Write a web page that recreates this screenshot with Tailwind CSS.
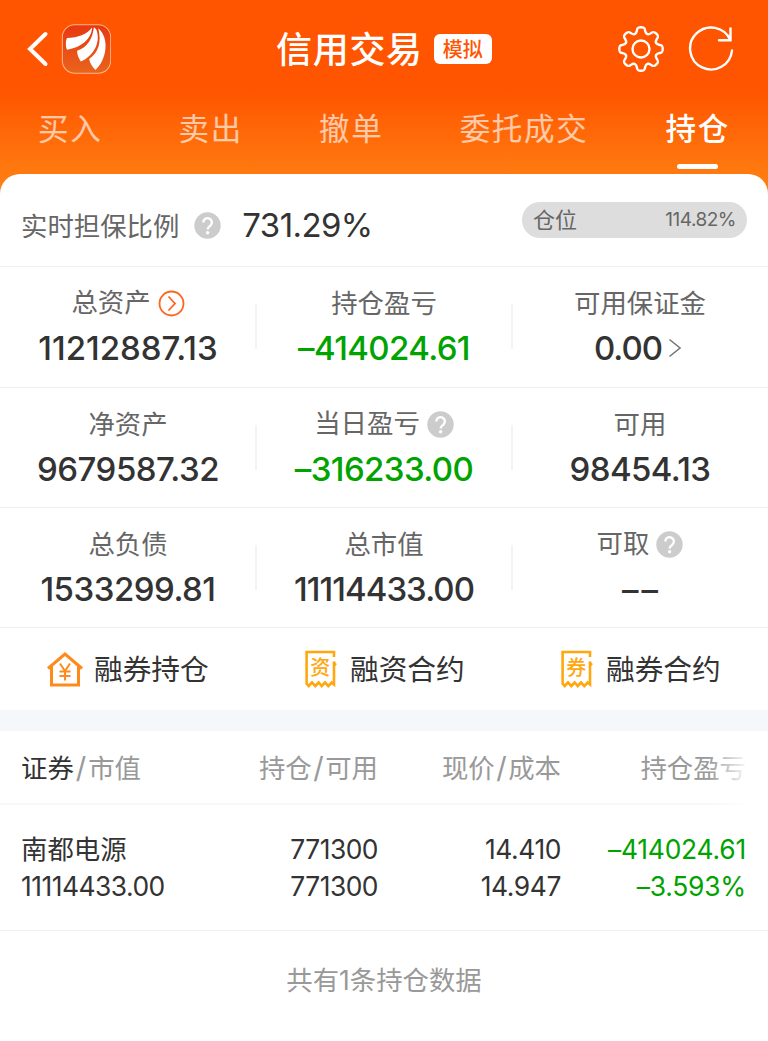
<!DOCTYPE html>
<html lang="zh-CN">
    <head>
        <meta charset="UTF-8" />
        <meta name="viewport" content="width=device-width, initial-scale=1.0" />
        <title>信用交易</title>
        <script src="https://cdn.jsdelivr.net/npm/@tailwindcss/browser@4"></script>
        <style>
            body {
                font-family: Inter, "Noto Sans CJK SC", sans-serif;
            }
        </style>
    </head>
    <body class="bg-white text-[#333] h-[1041px] overflow-hidden">
        <!-- 顶部 -->
        <header class="h-[194px] bg-linear-to-b from-[#ff5500] from-48% to-[#ff8214] to-100% text-white">
            <div class="h-[98px] flex items-center relative">
                <svg class="ml-[26px] w-[24px] h-[40px]" viewBox="0 0 24 40" fill="none" stroke="#fff" stroke-width="4" stroke-linecap="round" stroke-linejoin="miter">
                    <path d="M19.500 5 4 20l15.500 15" />
                </svg>
                <svg class="ml-[11px] w-[50px] h-[50px]" viewBox="-1 -1 149 149">
                    <defs>
                        <linearGradient id="logo" x1="0" y1="0" x2="0" y2="1">
                            <stop offset="0" stop-color="#e8380f" />
                            <stop offset="1" stop-color="#e9641c" />
                        </linearGradient>
                    </defs>
                    <rect x="3" y="1.500" width="144" height="144" rx="37" fill="url(#logo)" stroke="#ffb68f" stroke-width="3" />
                    <g fill="#fff">
                        <path d="M91 10C77 30 50 39 17 41c-5 8-4 26 0 35C60 68 88 46 92 11z" />
                        <path d="M97 9C93 44 77 70 47 79c0 12 5 23 11 32C93 95 115 60 107 24c-1-7-5-12-10-15z" />
                        <path d="M110 12c10 40 2 72-27 91 2 13 10 24 19 33C135 106 145 42 110 12z" />
                    </g>
                </svg>
                <div class="absolute left-[276px] flex items-center">
                    <h1 class="pt-[2px] text-[36px] leading-[48px] font-medium tracking-[0.7px]">信用交易</h1>
                    <span class="ml-[11px] w-[58px] h-[30px] rounded-[6px] bg-white text-[#ff5500] text-[20px] leading-[32px] font-medium text-center">模拟</span>
                </div>
                <svg class="ml-auto w-[48px] h-[48px]" viewBox="-24 -24 48 48" fill="none" stroke="#fff" stroke-width="2.400" stroke-linecap="round">
                    <defs>
                        <path id="tooth" d="M-6.200-15C-4.400-15.750-4.400-17-4-19-3.600-21.400-2.600-21.700 0-21.700S3.600-21.400 4-19C4.400-17 4.400-15.750 6.200-15" />
                    </defs>
                    <use href="#tooth" />
                    <use href="#tooth" transform="rotate(45)" />
                    <use href="#tooth" transform="rotate(90)" />
                    <use href="#tooth" transform="rotate(135)" />
                    <use href="#tooth" transform="rotate(180)" />
                    <use href="#tooth" transform="rotate(225)" />
                    <use href="#tooth" transform="rotate(270)" />
                    <use href="#tooth" transform="rotate(315)" />
                    <circle r="8.500" />
                </svg>
                <svg class="ml-[21.500px] mr-[33.500px] w-[48px] h-[48px]" viewBox="0 0 48 48" fill="none" stroke="#fff" stroke-width="2.400" stroke-linecap="round">
                    <path d="M45 25.500A21 21 0 1 1 43.300 15M43.500 3.500V15.300H32" />
                </svg>
            </div>
            <nav class="h-[76px] px-[38px] flex justify-between text-[30.500px] leading-[61px] tracking-[1.700px] text-white/65">
                <a class="-mr-[2px]">买入</a>
                <a class="ml-[15px]">卖出</a>
                <a class="ml-[13px]">撤单</a>
                <a class="ml-[13px]">委托成交</a>
                <a class="ml-[14px] text-white font-medium relative">持仓
                    <i class="absolute left-[11px] top-[66px] w-[41px] h-[5px] rounded-full bg-white"></i>
                </a>
            </nav>
        </header>

        <main class="-mt-[20px] relative bg-white rounded-t-[20px]">
            <!-- 担保比例 -->
            <div class="h-[93px] border-b border-[#efefef] flex items-center pl-[21px] pr-[21px]">
                <span class="text-[26.400px] text-[#666] pt-[14px]">实时担保比例</span>
                <svg class="ml-[15px] mt-[10px] w-[27px] h-[27px]" viewBox="0 0 27 27">
                    <circle cx="13.500" cy="13.500" r="13.200" fill="#ccc" />
                    <path d="M9.300 10.500a4.300 4.300 0 1 1 7 3.300c-1.600 1.200-2.700 1.800-2.700 3.700" fill="none" stroke="#fff" stroke-width="2.400" />
                    <circle cx="13.600" cy="20.700" r="1.700" fill="#fff" />
                </svg>
                <span class="ml-[21px] mt-[11px] text-[33px] tracking-[-0.600px]">731.29%</span>
                <div class="ml-auto w-[225px] h-[36px] rounded-full bg-[#ddd] flex items-center justify-between pl-[11px] pr-[11px] text-[#666]">
                    <span class="text-[22px]">仓位</span>
                    <span class="text-[19px] pt-[1px] tracking-[-0.500px]">114.82%</span>
                </div>
            </div>

            <!-- 资产 -->
            <section class="text-center">
                <div class="h-[120.500px] pt-[3px] border-b border-[#efefef] grid grid-cols-3 items-center">
                    <div>
                        <p class="flex items-center justify-center h-[40px] text-[26.400px] text-[#666]">总资产
                            <svg class="ml-[7px] w-[27px] h-[27px]" viewBox="0 0 27 27" fill="none" stroke="#ff6420" stroke-width="1.800">
                                <circle cx="13.500" cy="13.500" r="12" />
                                <path d="M10.500 6.500 17 13.500l-6.500 7" />
                            </svg>
                        </p>
                        <p class="text-[33px] leading-[50px] font-medium">11212887.13</p>
                    </div>
                    <div class="relative">
                        <i class="absolute left-[-1px] top-[21px] w-[2px] h-[45px] bg-[#f3f3f3]"></i>
                        <i class="absolute right-[-1px] top-[21px] w-[2px] h-[45px] bg-[#f3f3f3]"></i>
                        <p class="h-[40px] leading-[40px] text-[26.400px] text-[#666]">持仓盈亏</p>
                        <p class="text-[33px] leading-[50px] font-medium tracking-[-0.600px] text-[#00a300]">–414024.61</p>
                    </div>
                    <div>
                        <p class="h-[40px] leading-[40px] text-[26.400px] text-[#666]">可用保证金</p>
                        <p class="flex items-center justify-center text-[33px] leading-[50px] font-medium tracking-[-1px] pr-[4px]">0.00
                            <svg class="ml-[6px] w-[14px] h-[20px]" viewBox="0 0 14 20" fill="none" stroke="#777" stroke-width="1.600">
                                <path d="M1.500 1.500 12 10 1.500 18.500" />
                            </svg>
                        </p>
                    </div>
                </div>
                <div class="h-[120.500px] pt-[4px] border-b border-[#efefef] grid grid-cols-3 items-center">
                    <div>
                        <p class="h-[40px] leading-[40px] text-[26.400px] text-[#666]">净资产</p>
                        <p class="text-[33px] leading-[50px] font-medium tracking-[-0.500px]">9679587.32</p>
                    </div>
                    <div class="relative">
                        <i class="absolute left-[-1px] top-[21px] w-[2px] h-[45px] bg-[#f3f3f3]"></i>
                        <i class="absolute right-[-1px] top-[21px] w-[2px] h-[45px] bg-[#f3f3f3]"></i>
                        <p class="flex items-center justify-center h-[40px] text-[26.400px] text-[#666]">当日盈亏
                            <svg class="ml-[7px] w-[27px] h-[27px]" viewBox="0 0 27 27">
                                <circle cx="13.500" cy="13.500" r="13.200" fill="#ccc" />
                                <path d="M9.300 10.500a4.300 4.300 0 1 1 7 3.300c-1.600 1.200-2.700 1.800-2.700 3.700" fill="none" stroke="#fff" stroke-width="2.400" />
                                <circle cx="13.600" cy="20.700" r="1.700" fill="#fff" />
                            </svg>
                        </p>
                        <p class="text-[33px] leading-[50px] font-medium tracking-[-0.600px] text-[#00a300]">–316233.00</p>
                    </div>
                    <div>
                        <p class="h-[40px] leading-[40px] text-[26.400px] text-[#666]">可用</p>
                        <p class="text-[33px] leading-[50px] font-medium tracking-[-0.600px]">98454.13</p>
                    </div>
                </div>
                <div class="h-[120px] pt-[3px] border-b border-[#efefef] grid grid-cols-3 items-center">
                    <div>
                        <p class="h-[40px] leading-[40px] text-[26.400px] text-[#666]">总负债</p>
                        <p class="text-[33px] leading-[50px] font-medium tracking-[-0.500px]">1533299.81</p>
                    </div>
                    <div class="relative">
                        <i class="absolute left-[-1px] top-[21px] w-[2px] h-[45px] bg-[#f3f3f3]"></i>
                        <i class="absolute right-[-1px] top-[21px] w-[2px] h-[45px] bg-[#f3f3f3]"></i>
                        <p class="h-[40px] leading-[40px] text-[26.400px] text-[#666]">总市值</p>
                        <p class="text-[33px] leading-[50px] font-medium tracking-[-0.950px]">11114433.00</p>
                    </div>
                    <div>
                        <p class="flex items-center justify-center h-[40px] text-[26.400px] text-[#666]">可取
                            <svg class="ml-[7px] w-[27px] h-[27px]" viewBox="0 0 27 27">
                                <circle cx="13.500" cy="13.500" r="13.200" fill="#ccc" />
                                <path d="M9.300 10.500a4.300 4.300 0 1 1 7 3.300c-1.600 1.200-2.700 1.800-2.700 3.700" fill="none" stroke="#fff" stroke-width="2.400" />
                                <circle cx="13.600" cy="20.700" r="1.700" fill="#fff" />
                            </svg>
                        </p>
                        <p class="text-[33px] leading-[52px] h-[50px] font-medium tracking-[3px] pl-[3px]">––</p>
                    </div>
                </div>
            </section>

            <!-- 快捷入口 -->
            <div class="h-[82px] grid grid-cols-3 text-[28.700px]">
                <a class="flex items-center pl-[46px]">
                    <svg class="w-[38px] h-[38px]" viewBox="0 0 38 38" fill="none" stroke="#ff8a1c" stroke-width="3">
                        <path d="M2 18.500 19 4l17 14.500M5.500 16v19h27V16" />
                        <path d="M14 13.500l5 7.500 5-7.500M19 21V30.500M13.500 21.500h11M13.500 26h11" stroke-width="2" />
                    </svg>
                    <span class="ml-[10px] pt-[2px]">融券持仓</span>
                </a>
                <a class="flex items-center pl-[48px]">
                    <svg class="w-[34px] h-[40px]" viewBox="0 0 34 40" fill="none" stroke="#ffa70f" stroke-width="2.600">
                        <path d="M30 8V3H2.600V34.500L4.700 37 8 33.500l3.300 3.500 3.400-3.500 3 3.500 3.300-3.500 3.300 3.500 3.400-3.500 2.300 2V12.500" />
                        <path d="M30 12.500l2.600 2.500-2.600 3z" fill="#ffa70f" stroke-width="0.500" />
                        <text x="16.300" y="25.500" font-size="20" font-weight="500" text-anchor="middle" fill="#ffa70f" stroke="none">资</text>
                    </svg>
                    <span class="ml-[12px] pt-[2px]">融资合约</span>
                </a>
                <a class="flex items-center pl-[48px]">
                    <svg class="w-[34px] h-[40px]" viewBox="0 0 34 40" fill="none" stroke="#ffa70f" stroke-width="2.600">
                        <path d="M30 8V3H2.600V34.500L4.700 37 8 33.500l3.300 3.500 3.400-3.500 3 3.500 3.300-3.500 3.300 3.500 3.400-3.500 2.300 2V12.500" />
                        <path d="M30 12.500l2.600 2.500-2.600 3z" fill="#ffa70f" stroke-width="0.500" />
                        <text x="16.300" y="25.500" font-size="20" font-weight="500" text-anchor="middle" fill="#ffa70f" stroke="none">券</text>
                    </svg>
                    <span class="ml-[12px] pt-[2px]">融券合约</span>
                </a>
            </div>
            <div class="h-[21px] bg-[#f5f7fa]"></div>

            <!-- 持仓列表 -->
            <div class="relative">
                <div class="h-[74px] pt-[3px] border-b-2 border-[#f7f7f7] grid grid-cols-[164px_193px_183px_185px] pl-[21px] items-center text-right text-[26.400px] text-[#999]">
                    <span class="text-left"><b class="font-normal text-[#333]">证券</b><i class="not-italic text-[29px] leading-[30px] mx-[2px]">/</i>市值</span>
                    <span>持仓<i class="not-italic text-[29px] leading-[30px] mx-[1.500px]">/</i>可用</span>
                    <span>现价<i class="not-italic text-[29px] leading-[30px] mx-[1.500px]">/</i>成本</span>
                    <span>持仓盈亏</span>
                </div>
                <div class="absolute right-0 top-0 w-[60px] h-[74px] bg-linear-to-r from-white/0 to-white to-70%"></div>
            </div>
            <div class="h-[126px] border-b border-[#efefef] grid grid-cols-[164px_193px_183px_185px] pl-[21px] items-center text-right text-[26.400px] leading-[37px]">
                <p class="text-left">南都电源<br /><span class="tracking-[-0.500px]">11114433.00</span></p>
                <p class="tracking-[-0.500px]">771300<br />771300</p>
                <p class="tracking-[-0.400px]">14.410<br />14.947</p>
                <p class="tracking-[-0.200px] text-[#00a300]">–414024.61<br />–3.593%</p>
            </div>
            <p class="pt-[29px] text-center text-[26.400px] leading-[40px] text-[#999]">共有1条持仓数据</p>
        </main>
    </body>
</html>
